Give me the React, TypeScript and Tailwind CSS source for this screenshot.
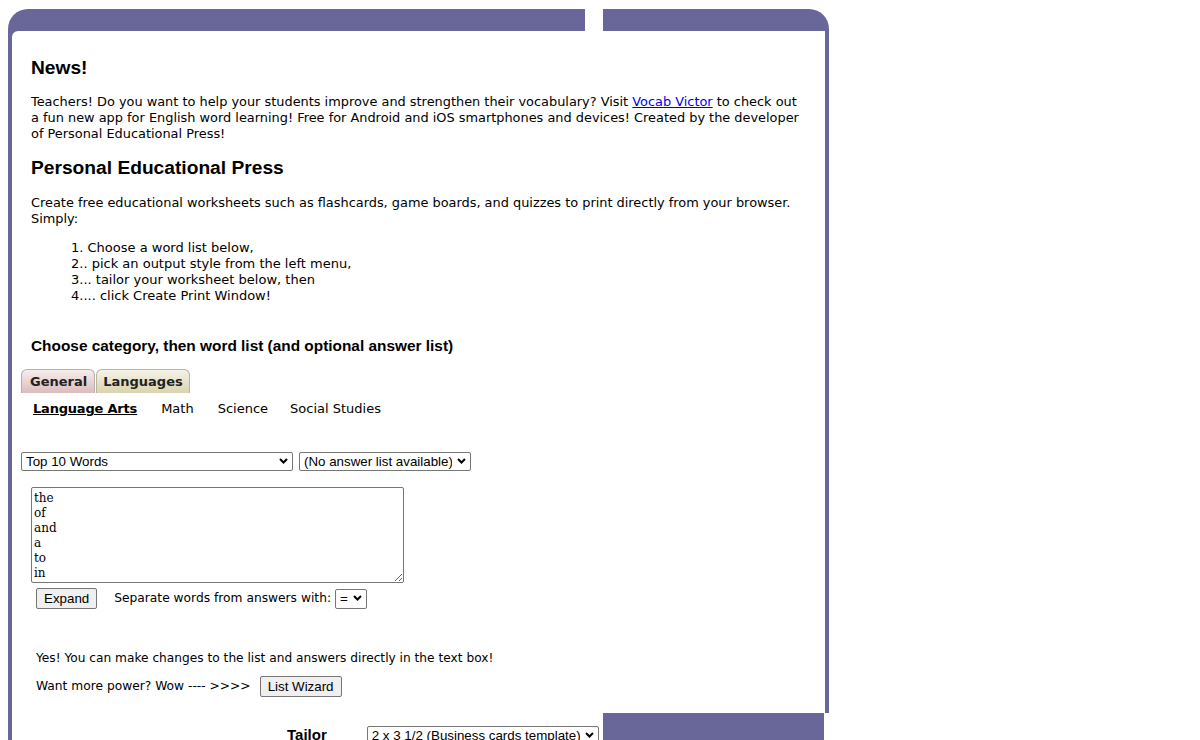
import React from "react";

function Chevron() {
  return (
    <svg width="9" height="6" viewBox="0 0 9 6" className="pointer-events-none absolute right-[5px] top-[6px]">
      <path d="M1 1 L4.5 4.5 L8 1" stroke="#000" strokeWidth="2" fill="none" />
    </svg>
  );
}

const selectCls =
  "appearance-none w-full h-full border border-[#767676] rounded-[2px] bg-white pl-[4px] pr-[18px] text-[13.33px] leading-[17px] text-black font-['Liberation_Sans',Arial,sans-serif] outline-none";

const btnCls =
  "h-[21px] px-[7px] border border-[#767676] rounded-[2px] bg-[#efefef] text-[13.33px] leading-[19px] text-black font-['Liberation_Sans',Arial,sans-serif]";

export default function App() {
  return (
    <div className="pl-[8px] pt-[9px] w-[837px] bg-white text-black font-['DejaVu_Sans',Verdana,sans-serif] text-[13px]">
      {/* top bars */}
      <div className="flex h-[22px]">
        <div className="w-[577px] rounded-tl-[20px] bg-[#69679a]" />
        <div className="w-[18px]" />
        <div className="w-[226px] rounded-tr-[20px] bg-[#69679a]" />
      </div>

      {/* upper body */}
      <div className="flex w-[821px] h-[682px] bg-[#69679a] pl-[4px] pr-[4px]">
        <div className="flex-1 bg-white rounded-tl-[6px] flex flex-col">
          <div className="pl-[19px] pr-[10px]">
            <h2 className="mt-[26px] text-[19.2px] leading-[22px] font-bold font-['Liberation_Sans',Arial,sans-serif]">
              News!
            </h2>
            <p className="mt-[15px] text-[12.9px] leading-[16px] whitespace-nowrap">
              Teachers! Do you want to help your students improve and strengthen their vocabulary? Visit{" "}
              <a href="#" className="text-[#0000ee] underline">
                Vocab Victor
              </a>{" "}
              to check out
              <br />
              a fun new app for English word learning! Free for Android and iOS smartphones and devices! Created by the developer
              <br />
              of Personal Educational Press!
            </p>
            <h2 className="mt-[15px] text-[19.2px] leading-[22px] font-bold font-['Liberation_Sans',Arial,sans-serif]">
              Personal Educational Press
            </h2>
            <p className="mt-[16px] text-[12.9px] leading-[16px] whitespace-nowrap">
              Create free educational worksheets such as flashcards, game boards, and quizzes to print directly from your browser.
              <br />
              Simply:
            </p>
            <div className="mt-[13px] pl-[40px] leading-[16px]">
              <div>1. Choose a word list below,</div>
              <div>2.. pick an output style from the left menu,</div>
              <div>3... tailor your worksheet below, then</div>
              <div>4.... click Create Print Window!</div>
            </div>
            <h3 className="mt-[33px] text-[15.4px] leading-[18px] font-bold font-['Liberation_Sans',Arial,sans-serif]">
              Choose category, then word list (and optional answer list)
            </h3>
          </div>

          {/* tabs */}
          <div className="mt-[14px] pl-[9px] flex h-[24px]">
            <div className="h-[24px] pl-[8px] pr-[7px] flex items-center border border-b-0 border-[#b9aeae] rounded-t-[6px] bg-linear-to-b from-[#f6eeec] to-[#dbbcbd] font-bold text-[#222]">
              General
            </div>
            <div className="ml-[1px] h-[24px] px-[6px] flex items-center border border-b-0 border-[#b9b4a0] rounded-t-[6px] bg-linear-to-b from-[#f5f3e8] to-[#d9d3ad] font-bold text-[#222]">
              Languages
            </div>
          </div>

          {/* subnav */}
          <div className="mt-[8px] pl-[21px] flex gap-[24px] leading-[16px]">
            <span className="font-bold underline tracking-[-0.2px]">Language Arts</span>
            <span>Math</span>
            <span>Science</span>
            <span className="-ml-[2px]">Social Studies</span>
          </div>

          {/* selects */}
          <div className="mt-[35px] pl-[9px] flex gap-[6px] h-[19px]">
            <div className="relative w-[272px] h-[19px]">
              <select className={selectCls} defaultValue="top10">
                <option value="top10">Top 10 Words</option>
              </select>
              <Chevron />
            </div>
            <div className="relative w-[172px] h-[19px]">
              <select className={selectCls} defaultValue="none">
                <option value="none">(No answer list available)</option>
              </select>
              <Chevron />
            </div>
          </div>

          {/* textarea */}
          <div className="mt-[16px] pl-[19px]">
            <textarea
              className="block w-[373px] h-[96px] border border-[#767676] rounded-[2px] px-[2px] pt-[3px] pb-[1px] text-[12px] leading-[15px] text-black font-['DejaVu_Serif',serif] outline-none"
              defaultValue={"the\nof\nand\na\nto\nin\nis\nyou\nthat\nit"}
            />
          </div>

          {/* expand row */}
          <div className="mt-[5px] pl-[24px] flex items-center h-[21px] text-[12.25px]">
            <button className={btnCls}>Expand</button>
            <span className="ml-[17px]">Separate words from answers with:</span>
            <div className="relative ml-[4px] w-[32px] h-[20px]">
              <select className={selectCls + " pl-[3px]"} defaultValue="eq">
                <option value="eq">=</option>
              </select>
              <Chevron />
            </div>
          </div>

          <div className="mt-[41px] pl-[24px] leading-[16px] text-[12.2px]">
            Yes! You can make changes to the list and answers directly in the text box!
          </div>

          <div className="mt-[10px] pl-[24px] flex items-center h-[21px] text-[12.25px]">
            <span>Want more power? Wow ---- &gt;&gt;&gt;&gt;</span>
            <button className={btnCls + " ml-[9px]"}>List Wizard</button>
          </div>
        </div>
      </div>

      {/* lower section */}
      <div className="flex h-[27px]">
        <div className="w-[4px] bg-[#69679a]" />
        <div className="w-[591px] bg-white flex items-start pt-[13px]">
          <span className="ml-[275px] text-[15px] leading-[18px] font-bold font-['Liberation_Sans',Arial,sans-serif]">
            Tailor
          </span>
          <div className="relative ml-[40px] w-[232px] h-[19px]">
            <select className={selectCls} defaultValue="bc">
              <option value="bc">2 x 3 1/2 (Business cards template)</option>
            </select>
            <Chevron />
          </div>
        </div>
        <div className="w-[221px] bg-[#69679a]" />
      </div>
    </div>
  );
}
